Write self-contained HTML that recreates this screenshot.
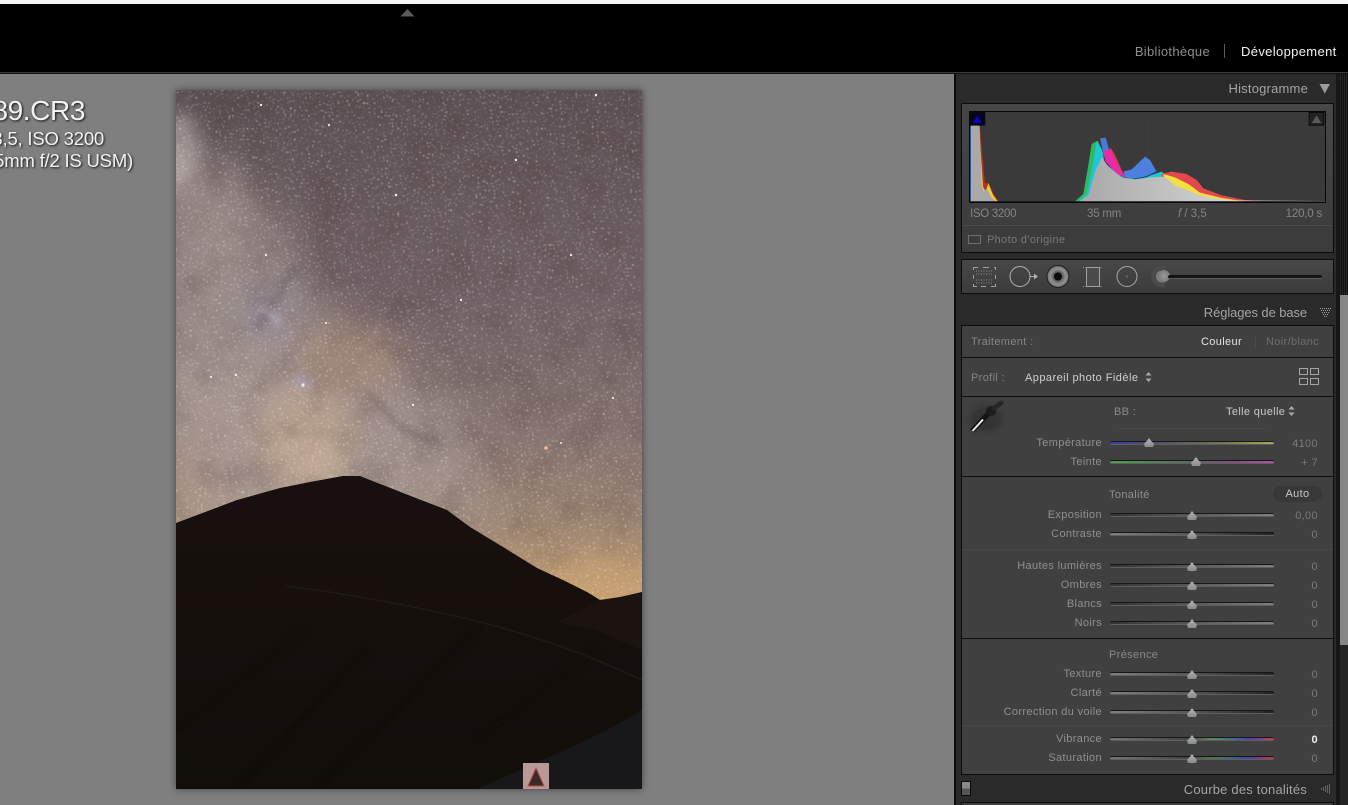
<!DOCTYPE html>
<html lang="fr"><head><meta charset="utf-8"><title>Développement</title>
<style>
html,body{margin:0;padding:0;background:#7f7f7f;width:1348px;height:805px;overflow:hidden}
#root{position:absolute;left:0;top:0;width:1348px;height:805px;overflow:hidden;font-family:"Liberation Sans",sans-serif;font-size:11px;letter-spacing:.35px;color:#999}
.a{position:absolute;white-space:nowrap}
.r{text-align:right}
.sec{position:absolute;left:961px;width:371px;background:#3e3e3e;border:1px solid #0c0c0c}
.hr{position:absolute;left:961px;width:372px;height:1px;background:#0d0d0d}
.lb{position:absolute;left:960px;width:142px;margin-top:1px;text-align:right;color:#8f8f8f;line-height:14px;white-space:nowrap}
.val{position:absolute;left:1268px;width:50px;margin-top:1px;text-align:right;color:#7b7b7b;line-height:14px}
.tr{position:absolute;left:1110px;width:164px;height:2px;border-radius:2px;border-top:1px solid #161616;border-bottom:1px solid #5f5f5f}
.n1{background:linear-gradient(90deg,#333,#555 45%,#808080)}
.n2{background:linear-gradient(90deg,#808080,#555 50%,#222)}
.th{position:absolute;width:10px;height:9px;background:linear-gradient(#b4b4b4,#8a8a8a);clip-path:polygon(50% 0,70% 30%,100% 65%,90% 100%,10% 100%,0 65%,30% 30%)}
.ph{position:absolute;margin-top:1px;color:#a4a4a4;font-size:13px;letter-spacing:.2px;white-space:nowrap}
</style></head><body><div id="root">

<div class="a" style="left:0;top:0;width:1348px;height:4px;background:#f4f4f4"></div>
<div class="a" style="left:0;top:4px;width:1348px;height:68px;background:#000"></div>
<div class="a" style="left:0;top:72px;width:1348px;height:1px;background:#3a3a3a"></div>
<div class="a" style="left:0;top:73px;width:1348px;height:1px;background:#111"></div>
<svg class="a" style="left:400px;top:8px" width="15" height="9"><path d="M0.5 8.5L7.5 1L14.5 8.5Z" fill="#5c5c5c"/></svg>
<div class="a r" style="left:1100px;width:110px;top:44px;font-size:13px;letter-spacing:.3px;color:#8e8e8e;line-height:16px">Bibliothèque</div>
<div class="a" style="left:1224px;top:44px;width:1px;height:14px;background:#5a5a5a"></div>
<div class="a" style="left:1241px;top:44px;font-size:13px;letter-spacing:.35px;color:#f2f2f2;line-height:16px">Développement</div>

<div class="a r" style="left:-120px;width:205px;top:94px;font-size:28px;letter-spacing:-.4px;line-height:34px;color:#f2f2f2;text-shadow:1px 1px 2px #111">_MG_2889.CR3</div>
<div class="a r" style="left:-120px;width:224px;top:128px;font-size:18.5px;letter-spacing:-.2px;line-height:22px;color:#f2f2f2;text-shadow:1px 1px 2px #111">1/120 s à f/3,5, ISO 3200</div>
<div class="a r" style="left:-120px;width:253px;top:150px;font-size:18.5px;letter-spacing:-.2px;line-height:22px;color:#f2f2f2;text-shadow:1px 1px 2px #111">EF35mm f/2 IS USM)</div>

<!-- PHOTO -->
<svg class="a" style="left:176px;top:90px;box-shadow:0 0 7px rgba(40,40,40,.7)" width="466" height="699" viewBox="0 0 466 699">
<defs>
<linearGradient id="sky" x1="0" y1="0" x2="0" y2="1">
<stop offset="0" stop-color="#5c4f53"/><stop offset=".3" stop-color="#6f6165"/><stop offset=".5" stop-color="#85746f"/><stop offset=".62" stop-color="#9c8672"/><stop offset=".7" stop-color="#b6946f"/><stop offset=".74" stop-color="#c8a06f"/>
</linearGradient>
<linearGradient id="hill" x1="0" y1="0" x2="0" y2="1"><stop offset="0" stop-color="#18100e"/><stop offset="1" stop-color="#120e0a"/></linearGradient>
<filter id="b40" x="-50%" y="-50%" width="200%" height="200%"><feGaussianBlur stdDeviation="26"/></filter>
<filter id="b14" x="-50%" y="-50%" width="200%" height="200%"><feGaussianBlur stdDeviation="12"/></filter>
<filter id="b7" x="-50%" y="-50%" width="200%" height="200%"><feGaussianBlur stdDeviation="9"/></filter>
<filter id="b4" x="-50%" y="-50%" width="200%" height="200%"><feGaussianBlur stdDeviation="3.5"/></filter>
<filter id="stars" x="0" y="0" width="100%" height="100%" color-interpolation-filters="sRGB">
<feTurbulence type="fractalNoise" baseFrequency=".55" numOctaves="2" seed="11"/>
<feColorMatrix values="0 0 0 0 1  0 0 0 0 .95  0 0 0 0 .95  12 0 0 0 -8.05"/>
<feGaussianBlur stdDeviation=".45"/>
</filter>
<filter id="cloud" x="0" y="0" width="100%" height="100%" color-interpolation-filters="sRGB">
<feTurbulence type="fractalNoise" baseFrequency=".03" numOctaves="4" seed="6"/>
<feColorMatrix values="0 0 0 0 .25  0 0 0 0 .18  0 0 0 0 .17  3 0 0 0 -1.3"/>
<feGaussianBlur stdDeviation="1.5"/>
</filter>
</defs>
<rect width="466" height="699" fill="url(#sky)"/>
<rect x="-20" y="280" width="160" height="220" fill="#b5a090" opacity=".6" filter="url(#b40)"/>
<path d="M-20 90L60 60L150 230L270 310L320 430L60 440L-20 300Z" fill="#a89a94" opacity=".75" filter="url(#b40)"/>
<ellipse cx="130" cy="350" rx="50" ry="55" fill="#c0a890" opacity=".6" filter="url(#b14)"/>
<ellipse cx="133" cy="365" rx="26" ry="26" fill="#d0b49e" opacity=".4" filter="url(#b14)"/>
<ellipse cx="175" cy="270" rx="50" ry="38" fill="#a68a76" opacity=".6" filter="url(#b14)"/>
<ellipse cx="4" cy="65" rx="18" ry="42" fill="#b8acaa" opacity=".8" filter="url(#b7)"/>
<ellipse cx="90" cy="222" rx="26" ry="30" fill="#8d889a" opacity=".55" filter="url(#b14)"/>
<ellipse cx="95" cy="225" rx="13" ry="5" transform="rotate(40 95 225)" fill="#c0bbc8" opacity=".6" filter="url(#b4)"/>
<ellipse cx="127" cy="292" rx="10" ry="8" fill="#a99fb8" opacity=".5" filter="url(#b4)"/>
<rect width="466" height="480" filter="url(#cloud)" opacity=".14"/>
<path d="M200 310C220 335 230 345 262 350" stroke="#5a4a48" stroke-width="5" fill="none" opacity=".4" filter="url(#b4)"/>
<path d="M205 250C230 270 245 270 265 285" stroke="#5a4a48" stroke-width="4" fill="none" opacity=".3" filter="url(#b4)"/>
<path d="M120 175L100 210L80 240" stroke="#4c4448" stroke-width="7" fill="none" opacity=".3" filter="url(#b4)"/>
<path d="M45 20C60 50 80 70 95 100" stroke="#463b3e" stroke-width="14" fill="none" opacity=".3" filter="url(#b14)"/>
<ellipse cx="430" cy="490" rx="70" ry="26" fill="#cda672" opacity=".5" filter="url(#b14)"/>
<rect width="466" height="520" filter="url(#stars)" opacity=".7"/>
<g fill="#f0e8ee">
<circle cx="85" cy="15" r="1.2"/><circle cx="153" cy="35" r="1.1"/><circle cx="220" cy="105" r="1.3"/><circle cx="90" cy="165" r="1.2"/><circle cx="395" cy="165" r="1.2"/><circle cx="285" cy="210" r="1.2"/><circle cx="150" cy="233" r="1.1"/><circle cx="127" cy="295" r="1.6"/><circle cx="237" cy="315" r="1.2"/><circle cx="340" cy="70" r="1.2"/><circle cx="420" cy="5" r="1.2"/><circle cx="385" cy="353" r="1"/><circle cx="60" cy="285" r="1.2"/><circle cx="437" cy="308" r="1.1"/><circle cx="35" cy="287" r="1.1"/>
<circle cx="370" cy="358" r="1.8" fill="#f0c088"/>
</g>
<!-- land -->
<path d="M0 433L61 410L104 398L134 392L167 386L184 386L227 403L271 420L294 437L327 457L361 478L387 490L411 502L424 510L444 507L466 502V699H0Z" fill="url(#hill)"/>
<path d="M381 532L424 510L444 508L466 502V560L420 540Z" fill="#1a1310"/>
<path d="M466 620L466 699H302C340 680 420 650 466 620Z" fill="#18181a"/>
<path d="M110 496C160 502 270 520 350 545C400 560 440 578 466 590" stroke="#1e1a17" stroke-width="1.5" fill="none"/>
<path d="M0 640L130 540M60 699L190 560M140 699L300 540M300 650L420 560" stroke="#0c0907" stroke-width="4" fill="none" opacity=".3" filter="url(#b4)"/>
<rect x="347" y="673" width="26" height="26" fill="#b79a96"/>
<path d="M360 678L368 696H352Z" fill="#3a2a28" stroke="#b84848" stroke-width="1"/>
</svg>

<!-- RIGHT PANEL -->
<div class="a" style="left:954px;top:74px;width:394px;height:731px;background:#2a2a2a"></div>
<div class="a" style="left:954px;top:74px;width:2px;height:731px;background:#0b0b0b"></div>
<div class="a" style="left:1336px;top:74px;width:4px;height:731px;background:#171717"></div>
<div class="a" style="left:1340px;top:74px;width:8px;height:221px;background:repeating-linear-gradient(90deg,#262626 0 1px,#111 1px 2px)"></div>
<div class="a" style="left:1340px;top:295px;width:8px;height:350px;background:#878787"></div>
<div class="a" style="left:1340px;top:645px;width:8px;height:160px;background:#242424"></div>

<div class="ph" style="right:40px;top:80px">Histogramme</div>
<svg class="a" style="left:1319px;top:83px" width="12" height="11"><path d="M0.5 1H11L5.8 10.5Z" fill="#9a9a9a"/></svg>

<div class="sec" style="top:103px;height:148px;background:linear-gradient(#474747,#3b3b3b)"></div>
<div class="a" style="left:969px;top:111px;width:355px;height:90px;background:#3a3a3a;border:1px solid #080808"></div>
<svg class="a" style="left:955px;top:70px" width="393" height="240" viewBox="0 0 1179 720">
<defs><linearGradient id="gg" x1="0" x2="1" y1="0" y2="0"><stop offset="0" stop-color="#a8a8a8"/><stop offset="1" stop-color="#d8d8d8"/></linearGradient></defs>
<g stroke="#444" stroke-width="1.5" opacity=".7"><path d="M310 130V394M576 130V394M842 130V394"/></g>
<g stroke="#3f3f3f" stroke-width="1"><path d="M204 130V394M257 130V394M363 130V394M470 130V394M682 130V394M789 130V394M948 130V394M1055 130V394"/></g>
<path d="M46 394V168H54V394Z" fill="#3667c8"/>
<path d="M74 165L90 340L100 338L118 375L132 394H48V165Z" fill="#b5301f"/>
<path d="M72 165L84 350L92 365L100 340L114 375L128 394H48V165Z" fill="#e8d33e"/>
<path d="M48 394V168H74L80 340L86 365L96 355L108 380L122 394Z" fill="#a9a9a9"/>
<path d="M360 394L385 372L400 285L410 222L428 212L445 250V394Z" fill="#2fb960"/>
<path d="M372 394L395 372L415 275L425 215L440 236L450 280L500 320L580 318L620 305L640 320V394Z" fill="#1cc7d8"/>
<path d="M435 205L452 203L462 238L448 262Z" fill="#4a7ad8"/>
<path d="M505 305L530 298L570 260L585 270L605 305L575 318L530 325L510 322Z" fill="#4c7fe0"/>
<path d="M505 322L530 328L575 320L605 305" stroke="#1e3c7c" stroke-width="3" fill="none"/>
<path d="M465 230L480 255L500 300L510 320L480 300Z" fill="#d9413f"/>
<path d="M445 245L465 236L490 290L512 322L485 312L452 275Z" fill="#ea2aa8"/>
<path d="M620 312L650 305L695 312L725 330L745 355L800 376L870 390L940 395H640Z" fill="#e4484c"/>
<path d="M625 312L660 322L700 342L735 368L800 384L870 394H640Z" fill="#f0e040"/>
<path d="M372 395L400 376L420 305L440 262L462 292L500 322L540 328L590 322L628 320L660 346L700 362L740 378L800 388L875 395Z" fill="url(#gg)"/>
<path d="M850 392L1107 394" stroke="#d8d0d8" stroke-width="2"/>
<path d="M47 395H1107" stroke="#111" stroke-width="2.5"/>
<rect x="45.500" y="127.500" width="44" height="38" fill="#05051f" stroke="#0a0a0a" stroke-width="3"/>
<path d="M53 159L67 137L81 159Z" fill="#0a08b8"/>
<rect x="1062.500" y="127.500" width="44" height="38" fill="#232323" stroke="#0a0a0a" stroke-width="3"/>
<path d="M1070 159L1085 137L1099 159Z" fill="#5a5a5a"/>
</svg>
<div class="a" style="left:970px;top:207px;font-size:11.500px;letter-spacing:-.3px;color:#858585;line-height:14px">ISO 3200</div>
<div class="a" style="left:1087px;top:207px;font-size:11.500px;letter-spacing:-.2px;color:#858585;line-height:14px">35 mm</div>
<div class="a" style="left:1178px;top:207px;font-size:11.500px;letter-spacing:0;color:#858585;line-height:14px"><i>f</i> / 3,5</div>
<div class="a r" style="left:1260px;width:62px;top:207px;font-size:11.500px;letter-spacing:-.2px;color:#858585;line-height:14px">120,0 s</div>
<div class="a" style="left:962px;top:225px;width:370px;height:1px;background:#4a4a4a"></div>
<div class="a" style="left:968px;top:235px;width:11px;height:7px;border:1px solid #6e6e6e"></div>
<div class="a" style="left:987px;top:233px;color:#787878;line-height:14px">Photo d'origine</div>

<div class="sec" style="top:259px;height:33px;background:linear-gradient(#474747,#3c3c3c)"></div>
<svg class="a" style="left:965px;top:260px" width="200" height="34" viewBox="0 0 200 34">
<g fill="none" stroke="#a0a0a0" stroke-width="1">
<path d="M8.500 10V7.500H13M18 7.500H24M29 7.500H30.500V10M30.500 15V19M30.500 24V26.500H26M21 26.500H16M12 26.500H8.500V24M8.500 19V15"/>
<path d="M11 11H28M11 14H28M11 20H28M11 23H28" stroke-dasharray="1 1.500" stroke="#8a8a8a"/>
<circle cx="55" cy="16.500" r="10" stroke="#b0b0b0"/>
<path d="M65 16.500H70" stroke="#b0b0b0"/>
<circle cx="162" cy="16.500" r="10" stroke="#a8a8a8"/>
<rect x="121.500" y="7.500" width="13" height="19" stroke="#a0a0a0" fill="#4b4b4b"/>
<path d="M118 7.500H137M118 26.500H137" stroke-dasharray="1 1.500" stroke="#a0a0a0"/>
</g>
<path d="M69 13.500L73 16.500L69 19.500Z" fill="#b0b0b0"/>
<defs><radialGradient id="eye"><stop offset=".3" stop-color="#4a4a4a"/><stop offset=".7" stop-color="#929292"/><stop offset="1" stop-color="#707070"/></radialGradient></defs>
<circle cx="93" cy="16.500" r="11" fill="url(#eye)" stroke="#1f1f1f"/>
<circle cx="93" cy="16.500" r="4" fill="#0c0c0c"/>
<circle cx="197" cy="16.500" r="11" fill="#4a4a4a"/>
<circle cx="197" cy="16.500" r="6" fill="#7c7c7c"/>
<circle cx="162" cy="16.500" r="1" fill="#6a6a6a"/>
</svg>
<div class="a" style="left:1158px;top:270px;width:12px;height:12px;border-radius:7px;background:radial-gradient(#9a9a9a,#6c6c6c)"></div>
<div class="a" style="left:1168px;top:275px;width:154px;height:3px;background:#141414;border-bottom:1px solid #5c5c5c;border-radius:2px"></div>

<div class="ph" style="right:41px;top:304px;letter-spacing:-.1px">Réglages de base</div>
<svg class="a" style="left:1320px;top:307px" width="11" height="11" fill="none" stroke="#a0a0a0" stroke-dasharray="1 1"><path d="M0 1.500H11M1 3.500H10M2 5.500H9M3 7.500H8M4 9.500H7"/></svg>

<div class="sec" style="top:325px;height:448px;background:#404040"></div>
<div class="hr" style="top:357px"></div><div class="hr" style="top:396px"></div><div class="hr" style="top:476px"></div><div class="hr" style="top:638px"></div>
<div class="a" style="left:962px;top:549px;width:370px;height:1px;background:#484848"></div>
<div class="a" style="left:962px;top:725px;width:370px;height:1px;background:#484848"></div>

<div class="a" style="left:971px;top:335px;color:#858585;line-height:14px">Traitement :</div>
<div class="a" style="left:1201px;top:335px;color:#e4e4e4;line-height:14px">Couleur</div>
<div class="a" style="left:1255px;top:336px;width:1px;height:12px;background:#4c4c4c"></div>
<div class="a" style="left:1266px;top:335px;color:#6e6e6e;line-height:14px">Noir/blanc</div>

<div class="a" style="left:971px;top:371px;color:#858585;line-height:14px">Profil :</div>
<div class="a" style="left:1025px;top:371px;color:#cfcfcf;line-height:14px;letter-spacing:.45px">Appareil photo Fidèle</div>
<svg class="a" style="left:1145px;top:372px" width="7" height="10"><path d="M3.500 0L6.500 3.500H.5ZM3.500 10L.5 6.500H6.500Z" fill="#aaa"/></svg>
<svg class="a" style="left:1299px;top:368px" width="21" height="18" fill="none" stroke="#a5a5a5"><rect x=".5" y=".5" width="8" height="6"/><rect x="11.500" y=".5" width="8" height="6"/><rect x=".5" y="10.500" width="8" height="6"/><rect x="11.500" y="10.500" width="8" height="6"/></svg>

<svg class="a" style="left:965px;top:398px" width="60" height="40" viewBox="0 0 60 40">
<ellipse cx="21" cy="21" rx="16" ry="13" fill="#333" filter="blur(3px)"/>
<path d="M7 33L24 15" stroke="#141414" stroke-width="5"/>
<path d="M7.500 33L18 21.500" stroke="#e8e8e8" stroke-width="2"/>
<circle cx="26" cy="13" r="5" fill="#1c1c1c"/>
<path d="M29 10L36 5" stroke="#262626" stroke-width="5" stroke-linecap="round"/>
</svg>

<div class="a" style="left:1114px;top:405px;color:#8a8a8a;line-height:14px">BB :</div>
<div class="a" style="left:1226px;top:405px;color:#c8c8c8;line-height:14px">Telle quelle</div>
<svg class="a" style="left:1288px;top:406px" width="7" height="10"><path d="M3.500 0L6.500 3.500H.5ZM3.500 10L.5 6.500H6.500Z" fill="#aaa"/></svg>
<div class="a" style="left:1118px;top:428px;width:148px;height:1px;background:#4a4a4a"></div>

<div class="lb" style="top:435px">Température</div><div class="tr" style="top:441px;background:linear-gradient(90deg,#3c3ca0,#56566a 35%,#77774e 70%,#a8a850)"></div><div class="th" style="left:1144px;top:438px"></div><div class="val" style="top:436px">4100</div>
<div class="lb" style="top:454px">Teinte</div><div class="tr" style="top:460px;background:linear-gradient(90deg,#4da04d,#56705a 45%,#7a4f7a 70%,#b050b0)"></div><div class="th" style="left:1191px;top:457px"></div><div class="val" style="top:455px">+ 7</div>

<div class="a" style="left:1109px;top:488px;color:#8f8f8f;line-height:14px">Tonalité</div>
<div class="a" style="left:1273px;top:486px;width:49px;height:16px;border-radius:8px;background:#383838;text-align:center;line-height:16px;color:#c8c8c8">Auto</div>

<div class="lb" style="top:507px">Exposition</div><div class="tr n1" style="top:513px"></div><div class="th" style="left:1187px;top:511px"></div><div class="val" style="top:508px">0,00</div>
<div class="lb" style="top:526px">Contraste</div><div class="tr n2" style="top:532px"></div><div class="th" style="left:1187px;top:530px"></div><div class="val" style="top:527px">0</div>

<div class="lb" style="top:558px">Hautes lumières</div><div class="tr n1" style="top:564px"></div><div class="th" style="left:1187px;top:562px"></div><div class="val" style="top:559px">0</div>
<div class="lb" style="top:577px">Ombres</div><div class="tr n1" style="top:583px"></div><div class="th" style="left:1187px;top:581px"></div><div class="val" style="top:578px">0</div>
<div class="lb" style="top:596px">Blancs</div><div class="tr n1" style="top:602px"></div><div class="th" style="left:1187px;top:600px"></div><div class="val" style="top:597px">0</div>
<div class="lb" style="top:615px">Noirs</div><div class="tr n1" style="top:621px"></div><div class="th" style="left:1187px;top:619px"></div><div class="val" style="top:616px">0</div>

<div class="a" style="left:1109px;top:648px;color:#8a8a8a;line-height:14px">Présence</div>
<div class="lb" style="top:666px">Texture</div><div class="tr n2" style="top:672px"></div><div class="th" style="left:1187px;top:670px"></div><div class="val" style="top:667px">0</div>
<div class="lb" style="top:685px">Clarté</div><div class="tr n2" style="top:691px"></div><div class="th" style="left:1187px;top:689px"></div><div class="val" style="top:686px">0</div>
<div class="lb" style="top:704px">Correction du voile</div><div class="tr n2" style="top:710px"></div><div class="th" style="left:1187px;top:708px"></div><div class="val" style="top:705px">0</div>

<div class="lb" style="top:731px">Vibrance</div><div class="tr" style="top:737px;background:linear-gradient(90deg,#777,#444 45%,#5a8a5a 62%,#3f6f90 75%,#4545b0 85%,#d03b4f)"></div><div class="th" style="left:1187px;top:735px"></div><div class="val" style="top:732px;color:#eee;font-weight:bold">0</div>
<div class="lb" style="top:750px">Saturation</div><div class="tr" style="top:756px;background:linear-gradient(90deg,#777,#444 45%,#4f7a4f 62%,#3f6080 75%,#45459a 85%,#b83b4b)"></div><div class="th" style="left:1187px;top:754px"></div><div class="val" style="top:751px">0</div>

<div class="a" style="left:961px;top:781px;width:8px;height:13px;background:linear-gradient(#8a8a8a 50%,#555 50%);border:1px solid #0c0c0c"></div>
<div class="ph" style="right:41px;top:781px">Courbe des tonalités</div>
<svg class="a" style="left:1320px;top:784px" width="11" height="11" fill="none" stroke="#a0a0a0" stroke-dasharray="1 1"><path d="M1.500 4.500V6.500M3.500 3.500V7.500M5.500 2.500V8.500M7.500 1.500V9.500M9.500 .5V10.500"/></svg>
<div class="sec" style="top:802px;height:20px"></div>
</div></body></html>
